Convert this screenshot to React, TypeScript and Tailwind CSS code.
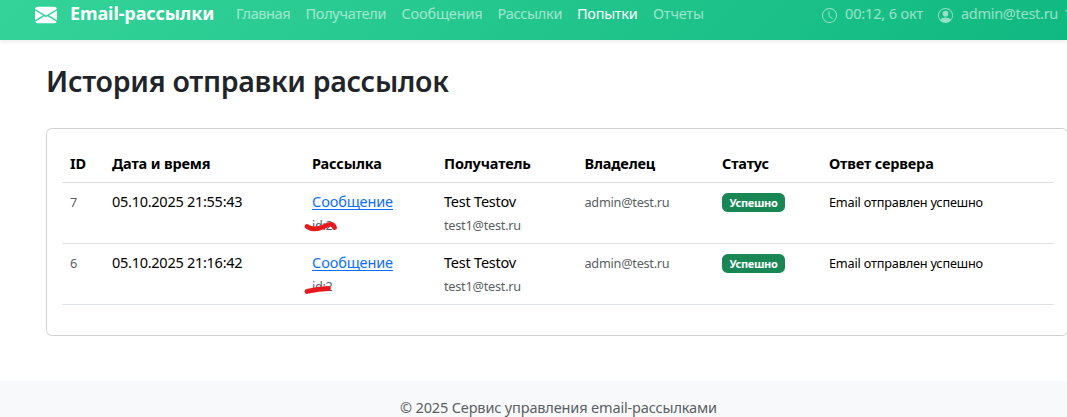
import React from 'react';
import { BsEnvelopeFill, BsClock, BsPersonCircle } from 'react-icons/bs';

type Attempt = { id: number; date: string; mark: React.ReactNode };

const attempts: Attempt[] = [
  {
    id: 7,
    date: '05.10.2025 21:55:43',
    mark: <path d="M4 9.5 C9 13 15 12 20 10 C25 8 27 6.5 29 7.5 C30 8 31 9 31.5 10.5" />,
  },
  { id: 6, date: '05.10.2025 21:16:42', mark: <path d="M4 13.5 C11 12 14 11 25.5 10.5" /> },
];

const columns = 'grid grid-cols-[42px_200px_132px_140.5px_137.5px_107px_1fr] border-b border-[#dee2e6] pl-2';
const small = 'text-[12.7px] leading-[22.5px]';

function Navbar() {
  return (
    <header className="h-10 shrink-0 bg-[linear-gradient(135deg,#34d399,#10b981)] shadow-[0_2px_4px_rgba(0,0,0,0.075)] text-[14.5px] leading-[26px] text-white/55">
      <div className="flex h-[26px] items-center pl-[35px]">
        <BsEnvelopeFill className="mt-1 w-[22px] h-[22px] shrink-0 text-white" />
        <span className="ml-[13px] w-[166px] shrink-0 whitespace-nowrap text-[18px] font-bold tracking-[-0.1px] text-white">Email-рассылки</span>
        <nav className="flex w-[586px] shrink-0 whitespace-nowrap">
          <a className="w-[69.5px] tracking-[-0.4px]">Главная</a>
          <a className="w-[96px] tracking-[-0.3px]">Получатели</a>
          <a className="w-[96px] tracking-[-0.16px]">Сообщения</a>
          <a className="w-[79.5px] tracking-[-0.27px]">Рассылки</a>
          <a className="w-[76px] tracking-[-0.3px] text-white">Попытки</a>
          <a className="tracking-[-0.2px]">Отчеты</a>
        </nav>
        <BsClock className="mt-[5px] h-[15px] w-[15px] shrink-0" />
        <span className="ml-2 w-[93px] shrink-0 whitespace-nowrap tracking-[-0.15px]">00:12, 6 окт</span>
        <BsPersonCircle className="mt-[5px] h-[15px] w-[15px] shrink-0" />
        <span className="ml-2 w-[104.5px] shrink-0 whitespace-nowrap tracking-[-0.29px]">admin@test.ru</span>
        <i className="-ml-px -mr-10 mt-[-2px] shrink-0 border-x-[4.5px] border-t-[4.5px] border-x-transparent border-t-white/55" />
      </div>
    </header>
  );
}

function Row({ id, date, mark }: Attempt) {
  return (
    <div className={`${columns} h-[61px] pt-[7px]`}>
      <div className={`${small} pt-px text-[#5a5f64]`}>{id}</div>
      <div className="tracking-[-0.27px]">{date}</div>
      <div>
        <a className="block tracking-[-0.12px] text-[#0d6efd] underline underline-offset-2">Сообщение</a>
        <div className={`${small} relative top-[1.5px] tracking-[-0.3px] text-[#5a5f64]`}>
          id:2
          <svg className="absolute -left-[9px] top-[3px] fill-none stroke-[#e8191c]" width="38" height="18" strokeWidth="4.8" strokeLinecap="round">
            {mark}
          </svg>
        </div>
      </div>
      <div>
        <div className="tracking-[-0.22px]">Test Testov</div>
        <div className={`${small} pt-[1.5px] tracking-[-0.23px] text-[#5a5f64]`}>test1@test.ru</div>
      </div>
      <div className={`${small} pt-px tracking-[-0.25px] text-[#5a5f64]`}>admin@test.ru</div>
      <div>
        <span className="mt-[3px] flex h-[19px] w-[63px] items-center justify-center rounded-[5.6px] bg-[#198754] pt-px text-[11px] font-bold tracking-[-0.3px] text-white">Успешно</span>
      </div>
      <div className={`${small} pt-px tracking-[-0.18px]`}>Email отправлен успешно</div>
    </div>
  );
}

export default function App() {
  return (
    <div className="flex h-[417px] w-[1067px] flex-col overflow-hidden bg-white font-['Noto_Sans',sans-serif] text-[14.5px] leading-[22.5px] text-black">
      <Navbar />
      <main className="h-[341px] shrink-0 pl-[46px]">
        <h1 className="pt-[23px] text-[28.5px] font-semibold leading-9 tracking-[-0.28px] text-[#212529]">История отправки рассылок</h1>
        <section className="mt-[29px] h-[208px] w-[1022px] rounded-[5.6px] border border-[#cfd0d1] pl-[15px] pr-[13px] pt-[15px]">
          <div className={`${columns} h-[39px] pt-[8px] font-bold tracking-[-0.16px]`}>
            <div>ID</div>
            <div>Дата и время</div>
            <div>Рассылка</div>
            <div>Получатель</div>
            <div>Владелец</div>
            <div>Статус</div>
            <div>Ответ сервера</div>
          </div>
          {attempts.map((attempt) => (
            <Row key={attempt.id} {...attempt} />
          ))}
        </section>
      </main>
      <footer className="h-9 shrink-0 bg-[#f8f9fa] pt-[15px] pl-[400px] tracking-[-0.15px] text-[#5a5f64]">© 2025 Сервис управления email-рассылками</footer>
    </div>
  );
}
